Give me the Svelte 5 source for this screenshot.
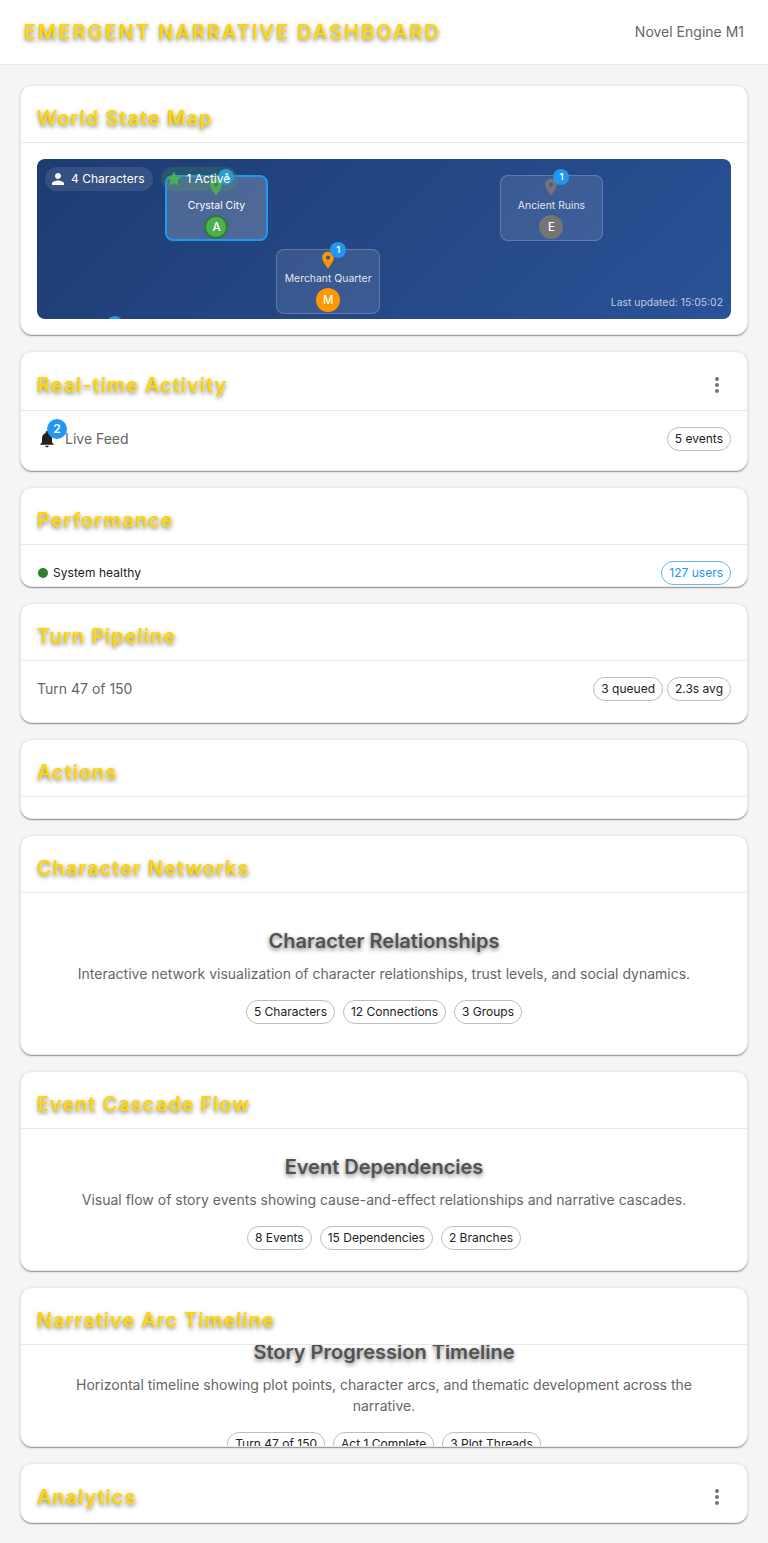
<script>
  const nodes = [
    { name: 'Crystal City', letter: 'A', color: '#4caf50', col: 2, row: 1, active: true },
    { name: 'Ancient Ruins', letter: 'E', color: '#757575', col: 5, row: 1 },
    { name: 'Merchant Quarter', letter: 'M', color: '#ff9800', col: 3, row: 2 },
    { name: '', letter: '', color: '#757575', col: 1, row: 3, empty: true }
  ];
  const summaries = [
    {
      title: 'Character Networks', height: 220, heading: 'Character Relationships',
      text: 'Interactive network visualization of character relationships, trust levels, and social dynamics.',
      chips: ['5 Characters', '12 Connections', '3 Groups']
    },
    {
      title: 'Event Cascade Flow', height: 200, heading: 'Event Dependencies',
      text: 'Visual flow of story events showing cause-and-effect relationships and narrative cascades.',
      chips: ['8 Events', '15 Dependencies', '2 Branches']
    },
    {
      title: 'Narrative Arc Timeline', height: 160, heading: 'Story Progression Timeline',
      text: 'Horizontal timeline showing plot points, character arcs, and thematic development across the narrative.',
      chips: ['Turn 47 of 150', 'Act 1 Complete', '3 Plot Threads']
    }
  ];
</script>

{#snippet more()}
  <button class="more" aria-label="More">
    <svg width="24" height="24" viewBox="0 0 24 24"><path d="M12 8c1.1 0 2-.9 2-2s-.9-2-2-2-2 .9-2 2 .9 2 2 2m0 2c-1.1 0-2 .9-2 2s.9 2 2 2 2-.9 2-2-.9-2-2-2m0 6c-1.1 0-2 .9-2 2s.9 2 2 2 2-.9 2-2-.9-2-2-2" /></svg>
  </button>
{/snippet}

<header class="top">
  <h1>Emergent Narrative Dashboard</h1>
  <span class="body2">Novel Engine M1</span>
</header>

<main>
  <section class="card" style:height="250px">
    <div class="head"><h2>World State Map</h2></div>
    <div class="body">
      <div class="map">
        <div class="grid">
          {#each nodes as n}
            <div class="node" class:active={n.active} style:grid-column={n.col} style:grid-row={n.row}>
              <div class="pin">
                <svg width="20" height="20" viewBox="0 0 24 24" fill={n.color}><path d="M12 2C8.13 2 5 5.13 5 9c0 5.25 7 13 7 13s7-7.75 7-13c0-3.87-3.13-7-7-7m0 9.500c-1.38 0-2.500-1.120-2.500-2.500s1.120-2.500 2.500-2.500 2.500 1.120 2.500 2.500-1.120 2.500-2.500 2.500" /></svg>
                <span class="badge small">{n.empty ? '' : '1'}</span>
              </div>
              <div class="name">{n.name}</div>
              <div class="avatar" style:background={n.color}>{n.letter}</div>
            </div>
          {/each}
        </div>
        <div class="stats">
          <div class="stat">
            <svg width="18" height="18" viewBox="0 0 24 24" fill="#fff"><path d="M12 12c2.210 0 4-1.790 4-4s-1.790-4-4-4-4 1.790-4 4 1.790 4 4 4m0 2c-2.670 0-8 1.340-8 4v2h16v-2c0-2.660-5.330-4-8-4" /></svg>
            <span>4 Characters</span>
          </div>
          <div class="stat green">
            <svg width="18" height="18" viewBox="0 0 24 24" fill="#4caf50"><path d="M12 17.270 18.180 21l-1.640-7.030L22 9.240l-7.190-.61L12 2 9.190 8.630 2 9.240l5.460 4.730L5.820 21z" /></svg>
            <span>1 Active</span>
          </div>
        </div>
        <div class="updated">Last updated: 15:05:02</div>
      </div>
    </div>
  </section>

  <section class="card" style:height="120px">
    <div class="head"><h2>Real-time Activity</h2>{@render more()}</div>
    <div class="body row">
      <div class="feed">
        <div class="bell">
          <svg width="20" height="20" viewBox="0 0 24 24" fill="#212121"><path d="M12 22c1.100 0 2-.9 2-2h-4c0 1.100.89 2 2 2m6-6v-5c0-3.070-1.640-5.640-4.500-6.320V4c0-.83-.67-1.500-1.500-1.500s-1.500.67-1.500 1.500v.68C7.630 5.360 6 7.920 6 11v5l-2 2v1h16v-1z" /></svg>
          <span class="badge">2</span>
        </div>
        <span class="body2">Live Feed</span>
      </div>
      <span class="chip">5 events</span>
    </div>
  </section>

  <section class="card" style:height="100px">
    <div class="head"><h2>Performance</h2></div>
    <div class="body row">
      <div class="health"><i class="dot"></i><span>System healthy</span></div>
      <span class="chip blue">127 users</span>
    </div>
  </section>

  <section class="card" style:height="120px">
    <div class="head"><h2>Turn Pipeline</h2></div>
    <div class="body row">
      <span class="body2">Turn 47 of 150</span>
      <div class="chips tight"><span class="chip">3 queued</span><span class="chip">2.3s avg</span></div>
    </div>
  </section>

  <section class="card" style:height="80px">
    <div class="head"><h2>Actions</h2></div>
  </section>

  {#each summaries as s}
    <section class="card" style:height="{s.height}px">
      <div class="head"><h2>{s.title}</h2></div>
      <div class="body center">
        <h3>{s.heading}</h3>
        <p class="body2">{s.text}</p>
        <div class="chips">{#each s.chips as c}<span class="chip">{c}</span>{/each}</div>
      </div>
    </section>
  {/each}

  <section class="card" style:height="60px">
    <div class="head"><h2>Analytics</h2>{@render more()}</div>
  </section>
</main>

<style>
  :global(body) { background: #f5f5f5; font-family: Inter, sans-serif; color: #212121; }
  :global(*) { box-sizing: border-box; }
  h1, h2, h3, p { margin: 0; }
  .top { height: 65px; padding: 0 24px 1px; background: #fff; border-bottom: 1px solid #e8e8e8; display: flex; align-items: center; justify-content: space-between; }
  h1, h2 { color: #ffd700; font-size: 20px; line-height: 32px; text-shadow: 0 2px 4px rgba(0, 0, 0, .5); }
  h1 { font-weight: 600; letter-spacing: 2px; text-transform: uppercase; }
  h2 { font-weight: 600; letter-spacing: 1px; }
  .body2 { font-size: 14px; font-weight: 400; line-height: 21px; color: #666; }
  main { padding: 20px; display: flex; flex-direction: column; gap: 16px; }
  .card { display: flex; flex-direction: column; overflow: hidden; background: #fff; border: 1px solid #e8e8e8; border-radius: 12px; box-shadow: 0 2px 1px -1px rgba(0, 0, 0, .2), 0 1px 1px rgba(0, 0, 0, .14), 0 1px 3px rgba(0, 0, 0, .12); }
  .head { flex: none; padding: 16px 16px 8px; border-bottom: 1px solid #e8e8e8; display: flex; align-items: center; justify-content: space-between; }
  .more { display: flex; padding: 5px; margin-right: -3px; border: 0; background: none; }
  .more svg { fill: #757575; }
  .body { flex: 1; min-height: 0; padding: 16px; overflow: hidden; }
  .row { display: flex; justify-content: space-between; align-items: flex-start; }
  .row > * { min-height: 24px; }
  .row > .body2 { line-height: 24px; }
  .feed, .health, .chips { display: flex; align-items: center; }
  .feed { gap: 8px; }
  .feed .body2 { line-height: 20px; }
  .bell, .pin { position: relative; display: flex; }
  .badge { position: absolute; top: -10px; right: -10px; width: 20px; height: 20px; border-radius: 10px; background: #2196f3; color: #fff; font-size: 12px; font-weight: 600; line-height: 20px; text-align: center; }
  .badge.small { top: -8px; right: -8px; width: 16px; height: 16px; font-size: 9.600px; line-height: 16px; }
  .health { gap: 5px; padding-left: 1px; font-size: 12px; line-height: 20px; letter-spacing: .07px; }
  .dot { width: 10px; height: 10px; border-radius: 50%; background: #2e7d32; }
  .chips { gap: 8px; }
  .chips.tight { gap: 4px; }
  .chip { height: 24px; padding: 0 7px; border: 1px solid #bdbdbd; border-radius: 12px; font-size: 12px; line-height: 22px; white-space: nowrap; }
  .chip.blue { color: #2196f3; border-color: #64b5f6; }
  .center { padding: 17px 32px 16px; display: flex; flex-direction: column; align-items: center; justify-content: center; text-align: center; }
  .center > * { flex: none; }
  h3 { font-size: 20px; font-weight: 600; line-height: 32px; color: #525252; text-shadow: 0 2px 4px rgba(0, 0, 0, .5); margin-bottom: 6px; }
  .center .body2 { max-width: 100%; margin-bottom: 16px; }

  .map { position: relative; height: 160px; border-radius: 8px; overflow: hidden; background: linear-gradient(135deg, #1e3c72 0%, #2a5298 100%); color: #fff; }
  .grid { padding: 16px; display: grid; grid-template-columns: repeat(6, 1fr); grid-auto-rows: 65.500px; gap: 8px; }
  .node { display: flex; flex-direction: column; align-items: center; justify-content: center; border: 1px solid rgba(255, 255, 255, .2); border-radius: 8px; background: rgba(255, 255, 255, .1); }
  .node.active { border: 2px solid #2196f3; background: rgba(255, 255, 255, .2); }
  .node > * { flex: none; }
  .name { height: 18px; font-size: 10.400px; font-weight: 400; line-height: 17px; color: rgba(255, 255, 255, .87); white-space: nowrap; }
  .active .name { color: #fff; }
  .avatar { width: 24px; height: 24px; border-radius: 50%; font-size: 11.500px; font-weight: 500; line-height: 24px; text-align: center; }
  .active .avatar { border: 2px solid #2e7d32; line-height: 20px; }
  .stats { position: absolute; top: 8px; left: 8px; display: flex; gap: 8px; }
  .stat { height: 24px; padding: 0 8px 0 4px; border-radius: 12px; background: rgba(255, 255, 255, .1); display: flex; align-items: center; gap: 4px; font-size: 12px; font-weight: 400; }
  .stat span { line-height: 24px; }
  .stat.green { background: rgba(76, 175, 80, .2); }
  .updated { position: absolute; right: 8px; bottom: 7px; font-size: 10.400px; line-height: 18px; color: rgba(255, 255, 255, .7); }
</style>
